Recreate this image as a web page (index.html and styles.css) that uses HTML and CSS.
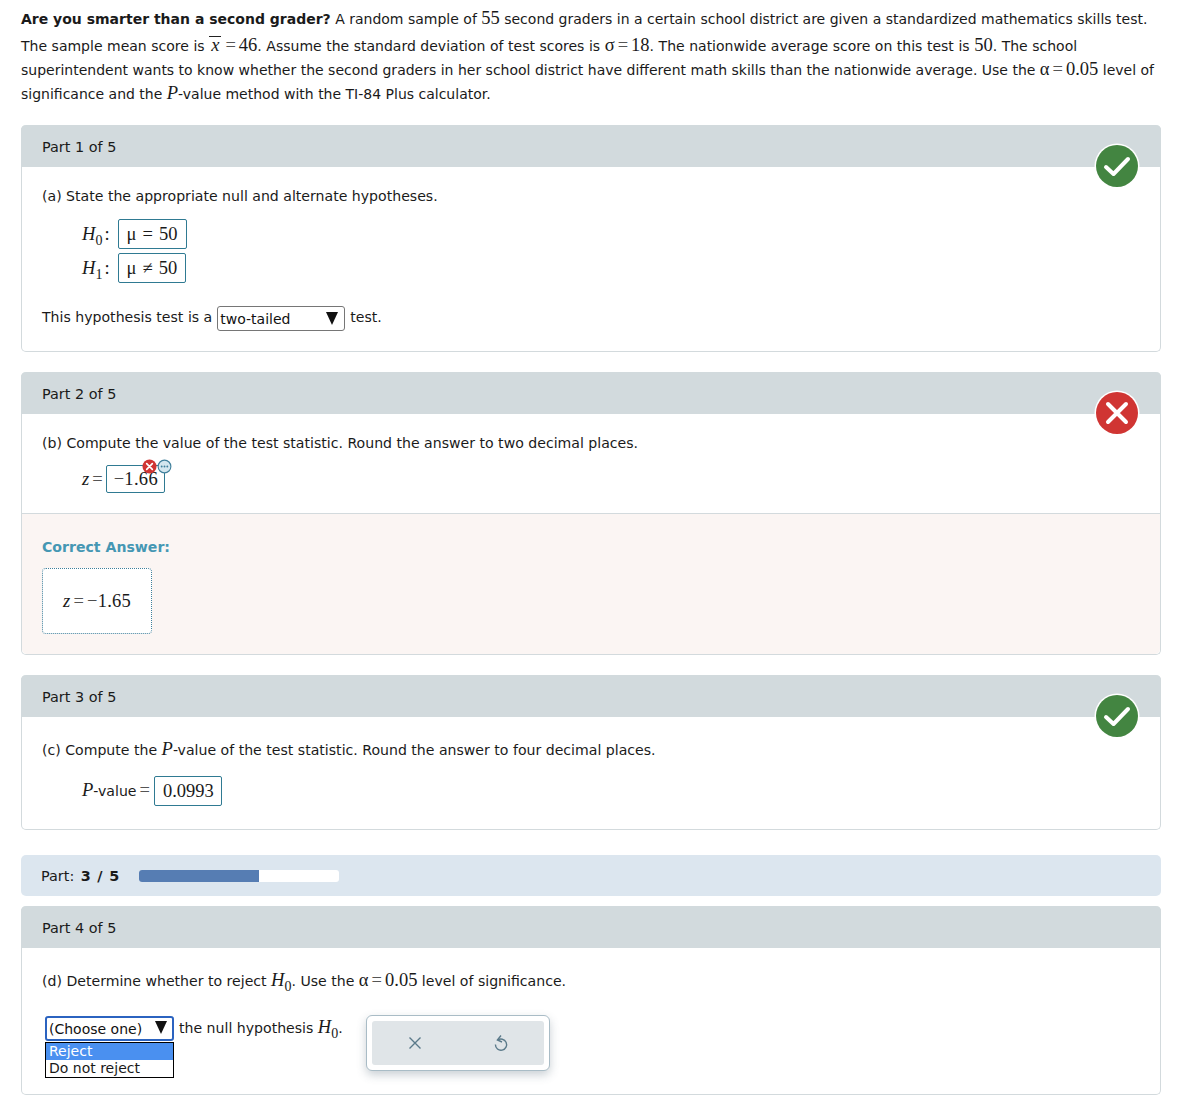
FILE: index.html
```html
<!DOCTYPE html>
<html lang="en">
<head>
    <meta charset="UTF-8">
    <title>Hypothesis test</title>
    <link rel="stylesheet" href="styles.css">
</head>
<body>
    <div class="page">
        <p class="question">
            <b>Are you smarter than a second grader?</b> A random sample of <span class="m">55</span> second graders in a certain school district are given a standardized mathematics skills test.<br>
            <span class="tall">The sample mean score is <span class="m"><i class="xbar">x</i><span class="eq">=</span>46</span>. Assume the standard deviation of test scores is <span class="m">σ<span class="eq">=</span>18</span>. The nationwide average score on this test is <span class="m">50</span>. The school</span><br>
            superintendent wants to know whether the second graders in her school district have different math skills than the nationwide average. Use the <span class="m">α<span class="eq">=</span>0.05</span> level of<br>
            significance and the <span class="m"><i>P</i></span>-value method with the TI-84 Plus calculator.
        </p>

        <section class="part part-one">
            <h2 class="part-head">Part 1 of 5</h2>
            <svg class="status" viewBox="0 0 46 46"><circle cx="23" cy="23" r="22.5" fill="#fff"/><circle cx="23" cy="23" r="21" fill="#438541"/><path d="M12 24l7.5 7L34 16" fill="none" stroke="#fff" stroke-width="4" stroke-linecap="round" stroke-linejoin="round"/></svg>
            <div class="part-body">
                <p class="prompt">(a) State the appropriate null and alternate hypotheses.</p>
                <div class="hyp-row">
                    <span class="m hyp-label"><i>H</i><sub>0</sub><span class="colon">:</span></span>
                    <span class="answer m">μ = 50</span>
                </div>
                <div class="hyp-row">
                    <span class="m hyp-label"><i>H</i><sub>1</sub><span class="colon">:</span></span>
                    <span class="answer m">μ ≠ 50</span>
                </div>
                <div class="test-row">
                    This hypothesis test is a
                    <span class="select select-wide"><span>two-tailed</span><span class="arrow"></span></span>
                    test.
                </div>
            </div>
        </section>

        <section class="part part-two">
            <h2 class="part-head">Part 2 of 5</h2>
            <svg class="status" viewBox="0 0 46 46"><circle cx="23" cy="23" r="22.5" fill="#fff"/><circle cx="23" cy="23" r="21" fill="#d03533"/><path d="M14 14l18 18M32 14L14 32" fill="none" stroke="#fff" stroke-width="4" stroke-linecap="round"/></svg>
            <div class="part-body body-b">
                <p class="prompt">(b) Compute the value of the test statistic. Round the answer to two decimal places.</p>
                <div class="z-row">
                    <span class="m"><i>z</i><span class="eq">=</span></span>
                    <span class="answer m z-answer">−1.66
                        <svg class="mini-x" viewBox="0 0 16 16"><circle cx="8" cy="8" r="7.5" fill="#d03533"/><path d="M5 5l6 6M11 5l-6 6" stroke="#fff" stroke-width="1.8" stroke-linecap="round"/></svg>
                        <svg class="mini-dots" viewBox="0 0 16 16"><circle cx="8" cy="8" r="6.8" fill="#d3e6ee" stroke="#3f7f9b" stroke-width="1.2"/><circle cx="5" cy="8" r="1" fill="#3f7f9b"/><circle cx="8" cy="8" r="1" fill="#3f7f9b"/><circle cx="11" cy="8" r="1" fill="#3f7f9b"/></svg>
                    </span>
                </div>
            </div>
            <div class="correct">
                <div class="correct-title">Correct Answer:</div>
                <div class="correct-box m"><i>z</i><span class="eq">=</span>−1.65</div>
            </div>
        </section>

        <section class="part part-three">
            <h2 class="part-head">Part 3 of 5</h2>
            <svg class="status" viewBox="0 0 46 46"><circle cx="23" cy="23" r="22.5" fill="#fff"/><circle cx="23" cy="23" r="21" fill="#438541"/><path d="M12 24l7.5 7L34 16" fill="none" stroke="#fff" stroke-width="4" stroke-linecap="round" stroke-linejoin="round"/></svg>
            <div class="part-body">
                <p class="prompt">(c) Compute the <span class="m"><i>P</i></span>-value of the test statistic. Round the answer to four decimal places.</p>
                <div class="p-row">
                    <span><span class="m"><i>P</i></span>-value<span class="m eq">=</span></span>
                    <span class="answer m">0.0993</span>
                </div>
            </div>
        </section>

        <div class="progress">
            <span>Part: <b>3 / 5</b></span>
            <div class="track"><div class="fill" style="width: 60%"></div></div>
        </div>

        <section class="part part-four">
            <h2 class="part-head">Part 4 of 5</h2>
            <div class="part-body">
                <p class="prompt">(d) Determine whether to reject <span class="m"><i>H</i><sub>0</sub></span>. Use the <span class="m">α<span class="eq">=</span>0.05</span> level of significance.</p>
                <div class="reject-row">
                    <div class="select-wrap">
                        <span class="select select-open"><span>(Choose one)</span><span class="arrow"></span></span>
                        <ul class="options">
                            <li class="active">Reject</li>
                            <li>Do not reject</li>
                        </ul>
                    </div>
                    <span class="reject-text">the null hypothesis <span class="m"><i>H</i><sub>0</sub></span>.</span>
                    <div class="toolbar">
                        <div class="toolbar-inner">
                            <svg width="16" height="16" viewBox="0 0 16 16"><path d="M2.5 2.5l11 11M13.5 2.5l-11 11" fill="none" stroke="#5b7a8a" stroke-width="1.4"/></svg>
                            <svg width="16" height="18" viewBox="0 0 16 18"><path d="M4.6 6.2A5.6 5.6 0 1 1 2.4 10.6" fill="none" stroke="#5b7a8a" stroke-width="1.4"/><path d="M8 1.5L4.4 6l4.6 2" fill="none" stroke="#5b7a8a" stroke-width="1.4"/></svg>
                        </div>
                    </div>
                </div>
            </div>
        </section>
    </div>
</body>
</html>
```

FILE: styles.css
```css
* {
    box-sizing: border-box;
}

body {
    margin: 0;
    background: #fff;
    color: #1a1a1a;
    font-family: "DejaVu Sans", Verdana, sans-serif;
    font-size: 14px;
    line-height: 24px;
}

.page {
    width: 1140px;
    margin-left: 21px;
    padding-top: 7px;
}

.m {
    font-family: "Liberation Serif", "Times New Roman", serif;
    font-size: 18.5px;
    line-height: 1;
}

.m i {
    font-style: italic;
}

.m sub {
    font-size: 14px;
    line-height: 0;
}

.eq {
    color: #555;
    margin: 0 3px;
}

.question {
    margin: 0 0 19px;
    white-space: nowrap;
}

.tall {
    display: inline-block;
    padding-top: 3px;
    word-spacing: 0.1px;
}

.xbar {
    display: inline-block;
    border-top: 1px solid #222;
    line-height: 17px;
    padding: 0 2px;
    margin-right: 1px;
}

.part {
    position: relative;
    border: 1px solid #d3dadd;
    border-top: 0;
    border-radius: 5px;
    margin-bottom: 20px;
    font-size: 14.1px;
}

.part-head {
    margin: 0 -1px;
    height: 42px;
    padding: 0 21px;
    background: #d2dadd;
    border-radius: 5px 5px 0 0;
    font-size: 14.4px;
    font-weight: normal;
    line-height: 44px;
}

.status {
    position: absolute;
    top: 18px;
    right: 20px;
    width: 46px;
    height: 46px;
}

.part-body {
    padding: 17px 20px 0;
}

.prompt {
    margin: 0;
}

.hyp-row {
    display: flex;
    align-items: center;
    gap: 8px;
    margin-left: 40px;
    margin-bottom: 4px;
    height: 30px;
}

.hyp-row:first-of-type {
    margin-top: 11px;
}

.colon {
    margin-left: 2px;
}

.answer {
    display: inline-flex;
    align-items: center;
    position: relative;
    height: 30px;
    padding: 0 8px;
    border: 1px solid #2f7a92;
    border-radius: 2px;
    background: #fff;
    white-space: nowrap;
    word-spacing: 1.5px;
}

.test-row {
    display: flex;
    align-items: center;
    gap: 5px;
    margin-top: 21px;
    padding-bottom: 22px;
}

.select {
    display: inline-flex;
    align-items: center;
    justify-content: space-between;
    height: 25px;
    padding: 1px 6px 0 2px;
    border: 1px solid #767676;
    border-radius: 3px;
    background: #fff;
    color: #111;
    font-size: 14px;
}

.select-wide {
    width: 128px;
    margin: 2px 0 -2px;
}

.arrow {
    width: 0;
    height: 0;
    margin-top: -2px;
    border-left: 6px solid transparent;
    border-right: 6px solid transparent;
    border-top: 13px solid #111;
}

.body-b {
    height: 99px;
}

.z-row {
    display: flex;
    align-items: center;
    margin-left: 40px;
    margin-top: 10px;
}

.z-answer {
    height: 28px;
    padding: 0 6px 0 7px;
    letter-spacing: 0.3px;
}

.mini-x,
.mini-dots {
    position: absolute;
    width: 15px;
    height: 15px;
    top: -7px;
}

.mini-x {
    right: 7px;
}

.mini-dots {
    right: -8px;
}

.correct {
    height: 141px;
    padding: 21px 20px 0;
    background: #fbf5f3;
    border-top: 1px solid #d3dadd;
    border-radius: 0 0 5px 5px;
}

.correct-title {
    color: #4597b3;
    font-weight: bold;
}

.correct-box {
    display: flex;
    align-items: center;
    justify-content: center;
    width: 110px;
    height: 66px;
    margin-top: 9px;
    background: #fff;
    border: 1px dotted #3f7f9b;
    border-radius: 4px;
    letter-spacing: 0.2px;
}

.part-three .part-body {
    padding-top: 21px;
}

.p-row {
    display: flex;
    align-items: center;
    gap: 1px;
    margin-left: 40px;
    margin-top: 14px;
    padding-bottom: 23px;
}

.p-row .answer {
    padding: 0 7px 0 8px;
}

.progress {
    display: flex;
    align-items: center;
    gap: 20px;
    height: 41px;
    margin-top: 25px;
    margin-bottom: 10px;
    padding: 0 20px;
    background: #dce6ef;
    border-radius: 5px;
    font-size: 14.4px;
}

.progress b {
    margin-left: 2px;
    word-spacing: 1.5px;
}

.track {
    width: 200px;
    height: 12px;
    background: #fff;
    border-radius: 3px;
    overflow: hidden;
}

.fill {
    height: 100%;
    background: #567db3;
}

.part-four {
    margin-bottom: 0;
}

.part-four .part-body {
    height: 146px;
    padding-top: 21px;
}

.reject-row {
    display: flex;
    align-items: flex-start;
    margin-top: 21px;
}

.select-wrap {
    position: relative;
    margin-left: 3px;
    margin-top: 2px;
}

.select-open {
    width: 129px;
    border: 2px solid #2b63c0;
    height: 25px;
    padding: 0 5px 0 2px;
}

.options {
    position: absolute;
    top: 26px;
    left: 0;
    width: 129px;
    margin: 0;
    padding: 0;
    list-style: none;
    border: 1px solid #000;
    background: #fff;
    font-size: 14px;
    line-height: 17px;
}

.options li {
    padding-left: 3px;
}

.options .active {
    background: #4a90f0;
    color: #fff;
}

.reject-text {
    margin-left: 5px;
    margin-top: 2px;
}

.toolbar {
    width: 184px;
    height: 56px;
    margin-left: 23px;
    margin-top: 1px;
    padding: 5px;
    background: #fff;
    border: 1px solid #a9bcc6;
    border-radius: 6px;
    box-shadow: 0 4px 10px rgba(80, 100, 115, 0.3);
}

.toolbar-inner {
    display: flex;
    align-items: center;
    justify-content: space-around;
    height: 100%;
    background: #e0e5e8;
    border-radius: 3px;
}
```
